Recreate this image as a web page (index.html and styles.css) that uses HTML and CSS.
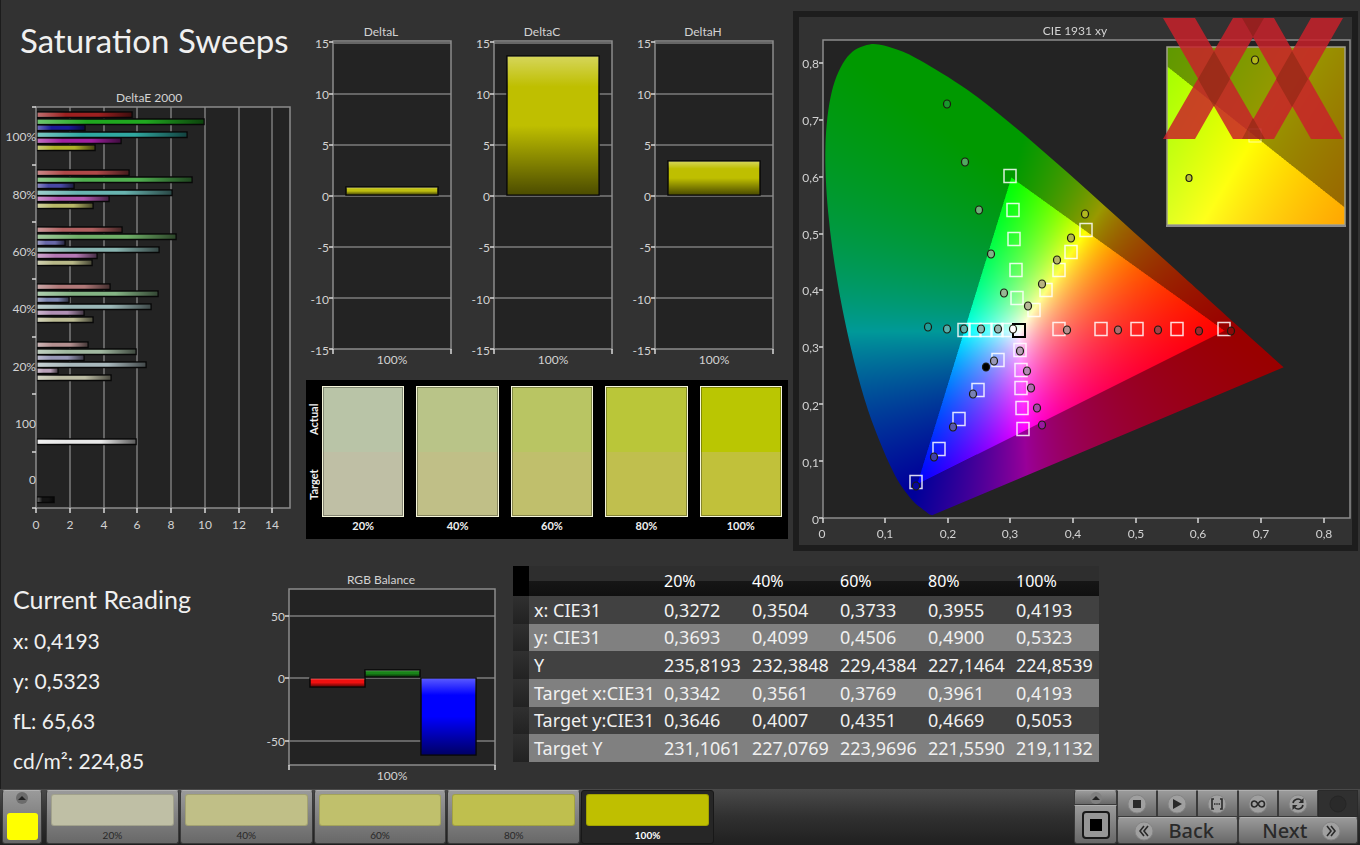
FILE: index.html
```html
<!DOCTYPE html>
<html lang="en">
<head>
<meta charset="utf-8">
<title>Saturation Sweeps</title>
<link rel="stylesheet" href="styles.css">
</head>
<body>
<main class="workspace">
  <div class="upper">
    <section class="sweep">
      <h1 class="title">Saturation Sweeps</h1>
      <svg class="chart" viewBox="0 80 306 460" role="img" aria-label="DeltaE 2000">
        <defs>
          <linearGradient id="shineH"><stop offset="0" stop-color="#fff" stop-opacity=".35"/><stop offset=".3" stop-color="#fff" stop-opacity="0"/><stop offset=".65" stop-color="#000" stop-opacity="0"/><stop offset="1" stop-color="#000" stop-opacity=".6"/></linearGradient>
          <linearGradient id="shineV" x2="0" y2="1"><stop offset="0" stop-color="#fff" stop-opacity=".35"/><stop offset=".22" stop-color="#fff" stop-opacity="0"/><stop offset=".5" stop-color="#000" stop-opacity="0"/><stop offset="1" stop-color="#000" stop-opacity=".6"/></linearGradient>
        </defs>
        <rect class="plot" x="36" y="107" width="254" height="401"/>
        <path class="grid" d="M70 107V508M104 107V508M137 107V508M171 107V508M205 107V508M239 107V508M272 107V508"/>
        <g id="deltaE"></g>
        <rect class="frame" x="36" y="107" width="254" height="401"/>
        <path class="tick" d="M32 107H36M32 165H36M32 222H36M32 279H36M32 337H36M32 394H36M32 452H36M32 508H36M36 508V513M70 508V513M104 508V513M137 508V513M171 508V513M205 508V513M239 508V513M272 508V513"/>
        <g class="mid">
          <text x="149" y="102">DeltaE 2000</text>
          <text x="36" y="529">0</text><text x="70" y="529">2</text><text x="104" y="529">4</text><text x="137" y="529">6</text><text x="171" y="529">8</text><text x="205" y="529">10</text><text x="239" y="529">12</text><text x="272" y="529">14</text>
        </g>
        <g class="end">
          <text x="36" y="141">100%</text><text x="36" y="199">80%</text><text x="36" y="256">60%</text><text x="36" y="313">40%</text><text x="36" y="371">20%</text><text x="36" y="428">100</text><text x="36" y="484">0</text>
        </g>
      </svg>
    </section>

    <section class="deltas">
      <div class="delta-row">
        <svg class="chart" viewBox="0 0 161 360" role="img" aria-label="DeltaL">
          <rect class="plot" x="27" y="21" width="118" height="308"/>
          <path class="grid" d="M27 23H145M27 74H145M27 125H145M27 176H145M27 227H145M27 278H145"/>
          <g id="deltaL"></g>
          <rect class="frame" x="27" y="21" width="118" height="308"/>
          <path class="tick" d="M23 22H27M23 74H27M23 125H27M23 176H27M23 227H27M23 278H27M23 329H27M27 329V334M145 329V334"/>
          <g class="mid"><text x="75" y="16">DeltaL</text><text x="86" y="344">100%</text></g>
          <g class="end"><text x="23" y="28">15</text><text x="23" y="79">10</text><text x="23" y="130">5</text><text x="23" y="181">0</text><text x="23" y="232">-5</text><text x="23" y="284">-10</text><text x="23" y="335">-15</text></g>
        </svg>
        <svg class="chart" viewBox="0 0 161 360" role="img" aria-label="DeltaC">
          <rect class="plot" x="27" y="21" width="118" height="308"/>
          <path class="grid" d="M27 23H145M27 74H145M27 125H145M27 176H145M27 227H145M27 278H145"/>
          <g id="deltaC"></g>
          <rect class="frame" x="27" y="21" width="118" height="308"/>
          <path class="tick" d="M23 22H27M23 74H27M23 125H27M23 176H27M23 227H27M23 278H27M23 329H27M27 329V334M145 329V334"/>
          <g class="mid"><text x="75" y="16">DeltaC</text><text x="86" y="344">100%</text></g>
          <g class="end"><text x="23" y="28">15</text><text x="23" y="79">10</text><text x="23" y="130">5</text><text x="23" y="181">0</text><text x="23" y="232">-5</text><text x="23" y="284">-10</text><text x="23" y="335">-15</text></g>
        </svg>
        <svg class="chart" viewBox="0 0 161 360" role="img" aria-label="DeltaH">
          <rect class="plot" x="27" y="21" width="118" height="308"/>
          <path class="grid" d="M27 23H145M27 74H145M27 125H145M27 176H145M27 227H145M27 278H145"/>
          <g id="deltaH"></g>
          <rect class="frame" x="27" y="21" width="118" height="308"/>
          <path class="tick" d="M23 22H27M23 74H27M23 125H27M23 176H27M23 227H27M23 278H27M23 329H27M27 329V334M145 329V334"/>
          <g class="mid"><text x="75" y="16">DeltaH</text><text x="86" y="344">100%</text></g>
          <g class="end"><text x="23" y="28">15</text><text x="23" y="79">10</text><text x="23" y="130">5</text><text x="23" y="181">0</text><text x="23" y="232">-5</text><text x="23" y="284">-10</text><text x="23" y="335">-15</text></g>
        </svg>
      </div>
      <div class="swatches">
        <div class="swatch-side"><span>Actual</span><span>Target</span></div>
        <figure class="swatch"><div class="pair s20"></div><figcaption>20%</figcaption></figure>
        <figure class="swatch"><div class="pair s40"></div><figcaption>40%</figcaption></figure>
        <figure class="swatch"><div class="pair s60"></div><figcaption>60%</figcaption></figure>
        <figure class="swatch"><div class="pair s80"></div><figcaption>80%</figcaption></figure>
        <figure class="swatch"><div class="pair s100"></div><figcaption>100%</figcaption></figure>
      </div>
    </section>

    <section class="cie">
      <div class="cie-stage">
        <canvas id="gamut" class="layer" width="553" height="528"></canvas>
        <svg class="layer" viewBox="799 17 553 528" role="img" aria-label="CIE 1931 xy">
          <rect class="frame" x="823" y="40" width="527" height="478"/>
          <path class="tick" d="M819 63H823M819 120H823M819 177H823M819 234H823M819 290H823M819 347H823M819 404H823M819 461H823M819 518H823M823 518V523M885 518V523M948 518V523M1010 518V523M1073 518V523M1136 518V523M1198 518V523M1261 518V523M1324 518V523"/>
          <g class="mid">
            <text x="1075" y="35">CIE 1931 xy</text>
            <text x="822" y="538">0</text><text x="885" y="538">0,1</text><text x="948" y="538">0,2</text><text x="1010" y="538">0,3</text><text x="1073" y="538">0,4</text><text x="1136" y="538">0,5</text><text x="1198" y="538">0,6</text><text x="1261" y="538">0,7</text><text x="1324" y="538">0,8</text>
          </g>
          <g class="end">
            <text x="819" y="68">0,8</text><text x="819" y="125">0,7</text><text x="819" y="182">0,6</text><text x="819" y="239">0,5</text><text x="819" y="295">0,4</text><text x="819" y="352">0,3</text><text x="819" y="410">0,2</text><text x="819" y="467">0,1</text><text x="819" y="524">0</text>
          </g>
          <g id="targets" class="targets"></g>
          <rect class="white-target" x="1013" y="324" width="12" height="13"/>
          <g id="readings" class="readings"></g>
          <rect class="inset" x="1167" y="47" width="178" height="178"/>
          <path class="inset-base" d="M1166 226H1346"/>
          <rect class="target-faint" x="1249" y="129" width="12" height="13"/>
          <g class="mark">
            <path d="M1163 18H1195L1265 139H1233ZM1233 18H1264L1195 139H1163ZM1242 18H1274L1343 139H1311ZM1311 18H1343L1274 139H1242Z"/>
            <path class="mark-cross" d="M1214 51L1230 79 1214 107 1198 79ZM1292 51L1308 79 1292 107 1276 79ZM1242 18H1264L1253 37ZM1242 139H1265L1253 118Z"/>
          </g>
          <g class="readings"><ellipse cx="1255" cy="60" rx="3.5" ry="4" fill="#b4b81c"/><ellipse cx="1189" cy="178" rx="3" ry="3.5" fill="#b8bc40"/></g>
        </svg>
      </div>
    </section>
  </div>

  <div class="lower">
    <section class="reading">
      <h2>Current Reading</h2>
      <p>x: 0,4193</p>
      <p>y: 0,5323</p>
      <p>fL: 65,63</p>
      <p>cd/m²: 224,85</p>
    </section>
    <section class="rgb">
      <svg class="chart" viewBox="260 565 250 220" role="img" aria-label="RGB Balance">
        <rect class="plot" x="289" y="589" width="206" height="176"/>
        <path class="grid" d="M289 616H495M289 678H495M289 741H495"/>
        <g id="rgb"></g>
        <rect class="frame" x="289" y="589" width="206" height="176"/>
        <path class="tick" d="M285 616H289M285 678H289M285 741H289M289 765V770M495 765V770"/>
        <g class="mid"><text x="381" y="584">RGB Balance</text><text x="392" y="780">100%</text></g>
        <g class="end"><text x="285" y="621">50</text><text x="285" y="683">0</text><text x="285" y="746">-50</text></g>
      </svg>
    </section>
    <section class="data">
      <table>
        <colgroup><col class="c-grip"><col class="c-name"><col><col><col><col><col></colgroup>
        <thead><tr><th class="corner"></th><th></th><th>20%</th><th>40%</th><th>60%</th><th>80%</th><th>100%</th></tr></thead>
        <tbody>
          <tr><td class="grip"></td><th>x: CIE31</th><td>0,3272</td><td>0,3504</td><td>0,3733</td><td>0,3955</td><td>0,4193</td></tr>
          <tr><td class="grip"></td><th>y: CIE31</th><td>0,3693</td><td>0,4099</td><td>0,4506</td><td>0,4900</td><td>0,5323</td></tr>
          <tr><td class="grip"></td><th>Y</th><td>235,8193</td><td>232,3848</td><td>229,4384</td><td>227,1464</td><td>224,8539</td></tr>
          <tr><td class="grip"></td><th>Target x:CIE31</th><td>0,3342</td><td>0,3561</td><td>0,3769</td><td>0,3961</td><td>0,4193</td></tr>
          <tr><td class="grip"></td><th>Target y:CIE31</th><td>0,3646</td><td>0,4007</td><td>0,4351</td><td>0,4669</td><td>0,5053</td></tr>
          <tr><td class="grip"></td><th>Target Y</th><td>231,1061</td><td>227,0769</td><td>223,9696</td><td>221,5590</td><td>219,1132</td></tr>
        </tbody>
      </table>
    </section>
  </div>
</main>

<footer class="bar">
  <button class="key current" aria-label="Current colour">
    <svg width="14" height="12" viewBox="0 0 14 12"><circle cx="7" cy="6" r="6" fill="#6c6c6c"/><path d="M3 8L7 4 11 8Z" fill="#222"/></svg>
    <span class="current-chip"></span>
  </button>
  <div class="levels">
    <button class="key level"><span class="chip c20"></span>20%</button>
    <button class="key level"><span class="chip c40"></span>40%</button>
    <button class="key level"><span class="chip c60"></span>60%</button>
    <button class="key level"><span class="chip c80"></span>80%</button>
    <button class="key level active"><span class="chip c100"></span>100%</button>
  </div>
  <div class="controls">
    <div class="pattern">
      <button class="key up" aria-label="Expand"><svg width="14" height="12" viewBox="0 0 14 12"><circle cx="7" cy="6" r="6" fill="#808080"/><path d="M3 8L7 4 11 8Z" fill="#222"/></svg></button>
      <button class="key window" aria-label="Pattern window"><svg width="28" height="28" viewBox="0 0 28 28"><rect x="1" y="1" width="26" height="26" rx="3" fill="#969696" stroke="#181818" stroke-width="2"/><rect x="8" y="8" width="12" height="12" fill="#000"/></svg></button>
    </div>
    <div class="transport">
      <div class="tools">
        <button class="key" aria-label="Stop"><svg class="icon" viewBox="0 0 20 20"><circle class="disc" cx="10" cy="10" r="9"/><path class="solid" d="M6 6h8v8H6z"/></svg></button>
        <button class="key" aria-label="Play"><svg class="icon" viewBox="0 0 20 20"><circle class="disc" cx="10" cy="10" r="9"/><path class="solid" d="M6 5L15 10 6 15Z"/></svg></button>
        <button class="key" aria-label="Range"><svg class="icon" viewBox="0 0 20 20"><circle class="disc" cx="10" cy="10" r="9"/><path class="line" d="M7 5H5V15H7M13 5H15V15H13M7 10H8.500M9.300 10H10.700M11.500 10H13"/></svg></button>
        <button class="key" aria-label="Loop"><svg class="icon" viewBox="0 0 20 20"><circle class="disc" cx="10" cy="10" r="9"/><path class="line" d="M10 10C8.500 7.500 7.500 7 6.500 7A3 3 0 0 0 6.500 13C7.500 13 8.500 12.500 10 10S12.500 7 13.500 7A3 3 0 0 1 13.500 13C12.500 13 11.500 12.500 10 10Z"/></svg></button>
        <button class="key" aria-label="Refresh"><svg class="icon" viewBox="0 0 20 20"><circle class="disc" cx="10" cy="10" r="9"/><path class="line" d="M5 9A5 5 0 0 1 13.500 6.500M15 11A5 5 0 0 1 6.500 13.500"/><path class="solid" d="M15.500 4V9H10.500ZM4.500 16V11H9.500Z"/></svg></button>
        <button class="key off" aria-label="Record" disabled><svg class="icon" viewBox="0 0 20 20"><circle cx="10" cy="10" r="8" fill="#2a2a2a" stroke="#262626"/></svg></button>
      </div>
      <div class="nav">
        <button class="key back"><svg class="icon" viewBox="0 0 20 20"><circle class="disc" cx="10" cy="10" r="9"/><path class="line" d="M10 5L6 10 10 15M14 5L10 10 14 15"/></svg>Back</button>
        <button class="key next">Next<svg class="icon" viewBox="0 0 20 20"><circle class="disc" cx="10" cy="10" r="9"/><path class="line" d="M6 5L10 10 6 15M10 5L14 10 10 15"/></svg></button>
      </div>
    </div>
  </div>
</footer>
<script src="charts.js"></script>
</body>
</html>
```
FILE: styles.css
```css
* { box-sizing: border-box; }

body {
  margin: 0;
  min-height: 100vh;
  display: flex;
  flex-direction: column;
  background: #323232;
  color: #f0f0f0;
  font-family: Lato, "Liberation Sans", sans-serif;
  font-size: 13px;
}

h1, h2, p, figure { margin: 0; font-weight: 400; }
button { font: inherit; }

.workspace { flex: 1; box-shadow: inset 1px 0 #1c1c1c; }

.upper {
  display: grid;
  grid-template-columns: 306fr 483fr 571fr;
  align-items: start;
}

.title {
  height: 80px;
  padding-left: 20px;
  font-size: 33px;
  line-height: 80px;
  white-space: nowrap;
}

.chart { display: block; width: 100%; height: auto; }
.plot { fill: #232323; }
.grid { stroke: #7c7c7c; stroke-width: 1.500; fill: none; }
.frame { stroke: #8c8c8c; stroke-width: 1.500; fill: none; }
.tick { stroke: #d8d8d8; stroke-width: 1.500; fill: none; }
svg text { font-size: 12px; fill: #d2d2d2; }
.mid { text-anchor: middle; }
.end { text-anchor: end; }
.bar-body { stroke: #080808; stroke-width: 1.500; }

.deltas { padding-top: 20px; }
.delta-row { display: grid; grid-template-columns: repeat(3, 1fr); }

.swatches {
  display: grid;
  grid-template-columns: 4px repeat(5, 1fr);
  gap: 0 12px;
  margin-right: 1px;
  padding: 6px 6px 5px 0;
  background: #000;
}
.swatch-side {
  display: flex;
  flex-direction: row-reverse;
  justify-content: space-around;
  width: 16px;
  height: 131px;
  writing-mode: vertical-rl;
  transform: rotate(180deg);
  font-size: 11px;
  line-height: 16px;
  font-weight: 700;
}
.swatch { text-align: center; font-size: 11px; line-height: 17px; font-weight: 700; }
.pair { height: 131px; border: 1px solid #f4f4d8; outline: 1px solid rgba(0, 0, 0, .3); outline-offset: -2px; }
.s20 { background: linear-gradient(#b9c4a7 50%, #bfbfa5 50%); }
.s40 { background: linear-gradient(#b9c488 50%, #c0bf87 50%); }
.s60 { background: linear-gradient(#b9c563 50%, #c0bf6c 50%); }
.s80 { background: linear-gradient(#bac639 50%, #c0bf4e 50%); }
.s100 { background: linear-gradient(#bac602 50%, #c1c13a 50%); }

.cie {
  margin: 11px 2px 0 4px;
  border: 6px solid #1d1d1d;
  background: #323232;
}
.cie-stage { display: grid; }
.layer { grid-area: 1 / 1; display: block; width: 100%; height: auto; }
.targets rect { fill: none; stroke: #fff; stroke-opacity: .85; stroke-width: 1.500; }
.white-target { fill: none; stroke: #000; stroke-width: 2; }
.readings ellipse { stroke: #1c1c10; stroke-width: 1.200; }
.inset { fill: none; stroke: #a0a08c; stroke-width: 1.500; }
.inset-base { stroke: #8c8c8c; stroke-width: 2; }
.target-faint { fill: none; stroke: #fff; stroke-opacity: .6; }
.mark path { fill: #c8202a; fill-opacity: .84; }
.mark .mark-cross { fill: #501800; fill-opacity: .28; }

.lower {
  display: grid;
  grid-template-columns: 260fr 250fr 589fr 261fr;
  align-items: start;
  margin-top: 14px;
}
.reading { padding: 16px 0 0 13px; }
.reading h2 { font-size: 25px; line-height: 36px; }
.reading p { font-size: 21px; line-height: 40px; }
.reading h2 + p { margin-top: 4px; }

.data { padding: 1px 0 0 3px; }
table {
  width: 100%;
  height: 196px;
  border-collapse: collapse;
  table-layout: fixed;
  font-family: "Noto Sans", sans-serif;
  font-size: 18px;
  line-height: 20px;
}
.c-grip { width: 16px; }
.c-name { width: 130px; }
th, td { padding: 0 0 0 5px; text-align: left; font-weight: 400; white-space: nowrap; }
thead tr { height: 30px; background: linear-gradient(#2e2e2e 50%, #161616 50%, #101010); }
thead th { font-size: 16px; color: #fff; }
.corner { background: #000; }
tbody tr { background: #414141; }
tbody tr:nth-child(even) { background: #808080; }
.grip { background: linear-gradient(#303030, #222); }

.bar {
  display: flex;
  align-items: stretch;
  height: 56px;
  padding: 1px 2px;
  background: linear-gradient(#4a4a4a, #303030 50%, #202020);
}
.key {
  display: flex;
  align-items: center;
  justify-content: center;
  padding: 0;
  border: 1px solid #3a3a3a;
  border-top-color: #b0b0b0;
  border-radius: 3px;
  background: linear-gradient(#9a9a9a, #686868);
  color: #2a2a2a;
}
.current { width: 40px; flex-direction: column; justify-content: space-between; padding: 1px 3px 3px; }
.current-chip { width: 31px; height: 27px; background: #ff0; border-radius: 3px; }
.levels { display: flex; flex: 0 1 668px; margin-left: 4px; gap: 1px; }
.level {
  flex: 1;
  flex-direction: column;
  justify-content: space-between;
  padding: 3px 4px 1px;
  font-size: 10px;
  line-height: 14px;
  color: #282828;
}
.chip { width: 100%; height: 32px; border-radius: 3px; border: 1px solid rgba(0, 0, 0, .15); }
.c20 { background: #bfbfa5; }
.c40 { background: #c0bf87; }
.c60 { background: #c0c06c; }
.c80 { background: #bfbf4e; }
.c100 { background: #bfbf00; }
.level.active { background: #262626; border-color: #181818; color: #fff; font-weight: 700; }

.controls { display: flex; margin-left: auto; flex: 0 0 284px; }
.pattern { display: flex; flex-direction: column; width: 43px; }
.up { height: 15px; border-radius: 3px 3px 0 0; }
.window { flex: 1; border-radius: 0 0 3px 3px; }
.transport { flex: 1; display: flex; flex-direction: column; }
.tools { display: grid; grid-template-columns: repeat(6, 1fr); height: 27px; }
.tools .key { border-radius: 0; }
.nav { display: grid; grid-template-columns: 1fr 1fr; flex: 1; font-family: "Noto Sans", sans-serif; font-size: 20px; line-height: 24px; }
.nav .key { gap: 14px; font-weight: 500; }
.nav .back { padding-right: 6px; }
.nav .next { padding-left: 8px; }
.tools .off { background: #303030; border-color: #2a2a2a; }
.icon { width: 20px; height: 20px; display: block; }
.disc { fill: #a0a0a0; stroke: #858585; }
.solid { fill: #2a2a2a; }
.line { fill: none; stroke: #2a2a2a; stroke-width: 1.600; }
```
FILE: charts.js
```js
const NS = 'http://www.w3.org/2000/svg';

function add(parent, name, attrs) {
  const el = document.createElementNS(NS, name);
  for (const key in attrs) el.setAttribute(key, attrs[key]);
  parent.appendChild(el);
  return el;
}

function drawBar(id, x, y, width, height, colour, shine) {
  const group = document.getElementById(id);
  add(group, 'rect', { x, y, width, height, fill: colour, class: 'bar-body' });
  add(group, 'rect', { x: x + 0.5, y: y + 0.5, width: width - 1, height: height - 1, fill: `url(#${shine})` });
}

// DeltaE: one group per saturation level, ordered R G B C M Y.
const groups = [
  [112, [132, 204, 85, 187, 121, 95], ['#9c2020', '#20a820', '#1a1a98', '#30a8a0', '#a020a0', '#b0b028']],
  [170, [129, 192, 74, 172, 109, 93], ['#b04848', '#50b050', '#4848a4', '#68b4b0', '#b058b0', '#b8b868']],
  [227, [122, 176, 65, 159, 97, 92], ['#b06060', '#70b068', '#6868a8', '#88b4b0', '#b478b4', '#b8b888']],
  [284, [110, 158, 69, 151, 84, 93], ['#b07878', '#84b484', '#7c84b0', '#9cb8b8', '#b090b4', '#bcbc94']],
  [342, [88, 136, 84, 146, 58, 111], ['#b49090', '#a0b8a0', '#9898b8', '#a8b8bc', '#b8a0b8', '#bcbca4']],
];
const steps = [0, 7, 13, 20, 26, 33];
for (const [top, ends, colours] of groups) {
  ends.forEach((end, i) => drawBar('deltaE', 37, top + steps[i], end - 37, 5.5, colours[i], 'shineH'));
}
drawBar('deltaE', 37, 439, 99, 5.5, '#e8e8e8', 'shineH');
drawBar('deltaE', 37, 497, 17, 5.5, '#141414', 'shineH');

drawBar('deltaL', 40, 167, 92, 8, '#bfbf10', 'shineV');
drawBar('deltaC', 40, 36, 92, 139, '#bfbf00', 'shineV');
drawBar('deltaH', 40, 141, 92, 34, '#bfbf00', 'shineV');

drawBar('rgb', 310, 678, 55, 9, '#f01010', 'shineV');
drawBar('rgb', 365, 670, 55, 7, '#188418', 'shineV');
drawBar('rgb', 421, 678, 55, 77, '#0000ff', 'shineV');

const targets = [
  [1010, 176], [1013, 210], [1014, 239], [1016, 270], [1017, 298],
  [1086, 230], [1071, 252], [1059, 270], [1046, 290], [1034, 310],
  [1059, 329], [1101, 329], [1137, 329], [1177, 329], [1224, 329],
  [1020, 350], [1021, 370], [1021, 388], [1022, 408], [1023, 429],
  [998, 360], [978, 390], [959, 419], [939, 449], [916, 482],
  [964, 330], [975, 330], [986, 330], [997, 330], [1008, 330],
];
const targetLayer = document.getElementById('targets');
for (const [x, y] of targets) add(targetLayer, 'rect', { x: x - 6, y: y - 6.5, width: 12, height: 13 });

const readings = [
  [947, 104, '#18982c'], [965, 162, '#50a860'], [979, 210, '#6cb078'], [991, 254, '#80b488'], [1004, 293, '#98b894'],
  [1085, 214, '#b0b820'], [1071, 238, '#b4b850'], [1057, 260, '#b8b868'], [1042, 284, '#b8b480'], [1028, 306, '#b8b898'],
  [1067, 330, '#b89090'], [1118, 330, '#b06c70'], [1158, 330, '#a84048'], [1199, 331, '#a02830'], [1231, 331, '#8c0808'],
  [1020, 351, '#b8a0b8'], [1027, 371, '#b488b4'], [1031, 388, '#b068b0'], [1037, 408, '#a848a8'], [1042, 425, '#9818a0'],
  [994, 361, '#9898b8'], [973, 394, '#7880b4'], [953, 427, '#5858b0'], [934, 457, '#4040a8'], [916, 486, '#08089c'],
  [928, 327, '#209c98'], [947, 329, '#58b0ac'], [964, 329, '#60b0ac'], [981, 329, '#88b8b4'], [998, 329, '#98b8b4'],
  [1013, 329, '#ffffff'], [986, 367, '#000000'],
];
const readingLayer = document.getElementById('readings');
for (const [cx, cy, fill] of readings) add(readingLayer, 'ellipse', { cx, cy, rx: 3.5, ry: 4, fill });

// Colour of a chromaticity at full brightness, dimmed outside the Rec.709 triangle.
function colourAt(x, y) {
  const Y = Math.max(y, 0.001), X = x / Y, Z = (1 - x - y) / Y;
  const rgb = [
    3.2405 * X - 1.5371 - 0.4985 * Z,
    -0.9693 * X + 1.8760 + 0.0416 * Z,
    0.0556 * X - 0.2040 + 1.0572 * Z,
  ];
  const peak = Math.max(...rgb);
  const level = Math.min(...rgb) < 0 ? 153 : 255;
  return rgb.map(v => level * Math.max(v, 0) / peak);
}

function field(width, height, toXY) {
  const c = document.createElement('canvas');
  c.width = width * 2;
  c.height = height * 2;
  const ctx = c.getContext('2d');
  const img = ctx.createImageData(c.width, c.height);
  for (let j = 0, k = 0; j < c.height; j++) {
    for (let i = 0; i < c.width; i++, k += 4) {
      const [r, g, b] = colourAt(...toXY(i / 2, j / 2));
      img.data[k] = r;
      img.data[k + 1] = g;
      img.data[k + 2] = b;
      img.data[k + 3] = 255;
    }
  }
  ctx.putImageData(img, 0, 0);
  return c;
}

const locus = [
  [.1741, .0050], [.1689, .0069], [.1644, .0109], [.1566, .0177], [.1440, .0297], [.1241, .0578],
  [.1096, .0868], [.0913, .1327], [.0687, .2007], [.0454, .2950], [.0235, .4127], [.0082, .5384],
  [.0039, .6548], [.0139, .7502], [.0389, .8120], [.0743, .8338], [.1142, .8262], [.1547, .8059],
  [.2296, .7543], [.3016, .6923], [.3731, .6245], [.4441, .5547], [.5125, .4866], [.5752, .4242],
  [.6270, .3725], [.6915, .3083], [.7347, .2653],
].map(([x, y]) => [24 + x * 627, 501 - y * 568]);

const ctx = document.getElementById('gamut').getContext('2d');
ctx.fillStyle = '#232323';
ctx.fillRect(24, 23, 527, 478);

ctx.save();
ctx.beginPath();
ctx.moveTo(...locus[0]);
for (let i = 0; i < locus.length - 1; i++) {
  const a = locus[Math.max(i - 1, 0)], b = locus[i], c = locus[i + 1], d = locus[Math.min(i + 2, locus.length - 1)];
  ctx.bezierCurveTo(
    b[0] + (c[0] - a[0]) / 6, b[1] + (c[1] - a[1]) / 6,
    c[0] - (d[0] - b[0]) / 6, c[1] - (d[1] - b[1]) / 6, c[0], c[1]);
}
ctx.closePath();
ctx.clip();
ctx.drawImage(field(553, 528, (i, j) => [(i - 24) / 627, (501 - j) / 568]), 0, 0, 553, 528);
ctx.restore();

// Magnified view around the 100% yellow target.
ctx.drawImage(field(178, 178, (i, j) => [.4193 + (i - 88) / 2780, .5053 - (j - 89) / 2780]), 368, 30, 178, 178);
```
